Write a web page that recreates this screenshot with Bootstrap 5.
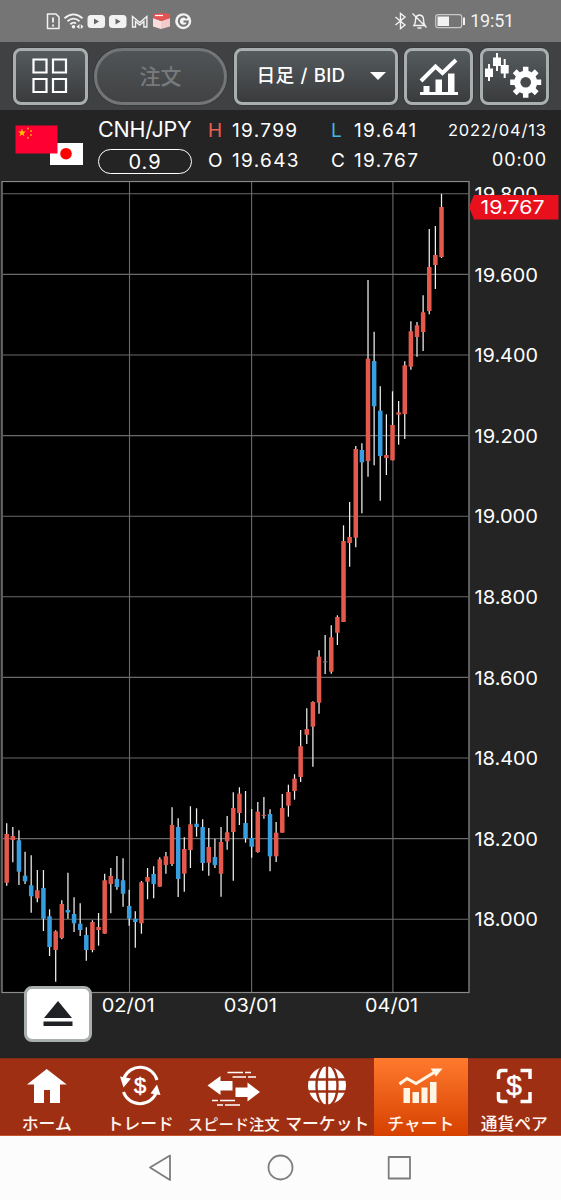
<!DOCTYPE html>
<html lang="ja">
<head>
<meta charset="utf-8">
<meta name="viewport" content="width=device-width, initial-scale=1">
<title>CNH/JPY チャート</title>
<link rel="stylesheet" href="https://cdn.jsdelivr.net/npm/bootstrap@5.3.0/dist/css/bootstrap.min.css">
<style>
body{background:#242424;color:#fff;font-family:Inter,"Noto Sans CJK JP",sans-serif;line-height:1;overflow:hidden}
.app{width:561px;height:1200px}
svg{display:block;flex:none}
.status{height:42px;background:#757575;color:#f2f2f2;padding:0 47px 0 46px;font-family:Roboto,sans-serif;font-size:18px}
.tools{height:68px;background:#404143;padding:0 12px 0 12.5px;gap:6.5px}
.tool{height:57px;border:3px solid #a9afaf;border-radius:8px;background:linear-gradient(#555b5e,#3a3b3d);color:#fff;padding:0;box-shadow:0 0 0 1px #37393b;font-family:Inter,"Noto Sans CJK JP",sans-serif;font-weight:500;line-height:1}
.tool.order{width:133px;border-color:#737676;border-radius:29px;background:linear-gradient(#505456,#414243);color:#777a7c;font-size:21px;font-weight:500}
.info{height:71px;padding:5px 15px 0 15px;display:grid;grid-template-columns:83px 110px 24px 99px 23px 1fr auto;grid-template-rows:30px 30px;align-items:center;font-size:19px;letter-spacing:1.35px}
.info .text-end{letter-spacing:.85px;margin-right:-.85px}
.flags{grid-row:1/3}
.pair{font-size:21.5px;letter-spacing:-.2px}
.spread{width:94px;height:25px;border:1.5px solid #fff;border-radius:13px;font-size:20px;letter-spacing:1px;margin-top:3px}
.chart{height:877px}
.chart text{fill:#fff;font-size:19px}
.eject{left:24px;top:805px;width:68px;height:56px;border:3px solid #a9afaf;border-radius:8px;background:#fff}
.tabs{height:78px;background:#9f2f13;border-top:1px solid #7e2b18;border-bottom:1px solid #c4532e}
.tab{width:93.5px;font-family:"Noto Sans CJK JP",sans-serif;font-weight:500;font-size:16.8px;color:#fff5ee;text-decoration:none;white-space:nowrap;padding-top:4px}
.tab.active{background:linear-gradient(#ff7a2d,#d64000);margin:-1px 0}
.tab span{line-height:20px;margin-top:4px}
.tab .tight{font-size:15.3px}
.sysnav{height:64px;background:#fcfcfc;padding-right:2px}
</style>
</head>
<body>
<main class="app d-flex flex-column position-relative">
<header class="status d-flex align-items-center justify-content-between">
<svg width="150" height="22" viewBox="46 10 150 22" fill="none" stroke="#f2f2f2">
<path d="M51 14h5l3 3v11.500H47.500V14z" stroke-width="1.500" stroke-linejoin="round"/><path d="M53 17.500v5M53 24.500v2" stroke-width="1.800"/>
<path d="M64.500 18.200Q73.500 10.500 82.500 18.200M67.500 21.200Q73.500 16 79.500 21.200M70.300 24.200Q73.500 21.500 76 23.500" stroke-width="1.800"/><circle cx="73.500" cy="26.700" r="1.800" fill="#f2f2f2" stroke="none"/><path d="M79.500 24l-3 2.800 3 2.200zM80.800 24l2.700 2.800-2.700 2.200z" fill="#f2f2f2" stroke="none"/>
<g stroke="none"><rect x="87.500" y="15" width="17.500" height="13" rx="3.500" fill="#f2f2f2"/><path d="M94 18.500l5 3-5 3z" fill="#666"/><rect x="109" y="15" width="17.500" height="13" rx="3.500" fill="#f2f2f2"/><path d="M115.500 18.500l5 3-5 3z" fill="#666"/></g>
<path d="M132.500 27V16.500l7.200 6 7.200-6V27h-3v-5.500l-4.200 3.500-4.200-3.500V27z" stroke-width="1.400"/>
<g stroke="none"><path d="M153 18l8 3v8l-8-2.500z" fill="#f7dddd"/><path d="M170 18l-9 3v8l9-2.500z" fill="#f3c9c9"/><path d="M154 14l7-1 9 1v4l-8.500 3-8.500-3z" fill="#e65353"/><path d="M155 15.500h8" stroke="#fff" stroke-width="1.200"/><circle cx="183.200" cy="21.200" r="8" fill="#f2f2f2"/></g><path d="M187 18.300a4.600 4.600 0 1 0 0 5.800q.8-1 .8-2.500H183.500" stroke="#757575" stroke-width="2"/>
</svg>
<div class="d-flex align-items-center">
<svg width="77" height="22" viewBox="392 10 77 22" fill="none" stroke="#f2f2f2" stroke-width="1.400"><path d="M396.500 17l9.500 8-4.500 3.500V13.500L406 17l-9.500 8"/><path d="M416 25.500h10c-1.500-2-1.500-3-1.500-6q0-4-4-4.500-3.800.5-4 4.500c0 3 .2 4-1.500 6zM413.500 13.500l14 14M418.500 28h4"/><rect x="436.700" y="14.700" width="26" height="13" rx="2.500" stroke="#c8c8c8" stroke-width="1.200"/><rect x="438.500" y="16.500" width="11.500" height="9.500" fill="#f2f2f2" stroke="none"/><path d="M465 17.500v7.500" stroke-width="2"/></svg>
<span style="margin-left:2px;letter-spacing:-.2px">19:51</span>
</div>
</header>

<nav class="tools d-flex align-items-center">
<button class="tool btn d-flex align-items-center justify-content-center" style="width:75px" aria-label="layout"><svg width="36" height="36" fill="none" stroke="#fff" stroke-width="2.200"><path d="M1.500 1.500h13v13h-13zM21 1.500h13v13H21zM1.500 21h13v13h-13zM21 21h13v13H21z"/></svg></button>
<button class="tool order btn">注文</button>
<button class="tool btn d-flex align-items-center" style="width:164px;padding-left:20px;font-size:18.700px"><span style="word-spacing:1px;letter-spacing:.2px">日足 / BID</span><svg class="ms-auto" style="margin-right:9px" width="16" height="10"><path d="M0 1h16L8 9z" fill="#fff"/></svg></button>
<button class="tool btn d-flex align-items-center justify-content-center" style="width:69px" aria-label="indicator"><svg width="40" height="40" viewBox="419 56 40 40"><path d="M421 81l14.500-14.500 7 6.500L456 60" fill="none" stroke="#fff" stroke-width="4"/><path d="M420 92h38v3h-38zM423.500 86h6v7h-6zM435.500 79.500h6.500V93h-6.500zM448 73.500h6.500V93H448z" fill="#fff"/></svg></button>
<button class="tool btn d-flex align-items-center justify-content-center" style="width:69px" aria-label="settings"><svg width="60" height="50" viewBox="485 52 60 50" fill="#fff"><path d="M486 69.500h8v8.500h-8zM494 58.500h8V67h-8zM501.700 66h8v8.500h-8z"/><path d="M490 65v17M498 54v18M505.700 60v19" stroke="#fff" stroke-width="2"/><g transform="translate(526.700 83.300)"><path d="M0-15.500V15.500M-15.500 0H15.500M-11-11L11 11M-11 11L11-11" stroke="#fff" stroke-width="5.500"/><circle r="11.500"/><circle r="5.300" fill="#47494b"/></g></svg></button>
</nav>

<section class="info">
<svg class="flags" width="69" height="42" viewBox="15 124 69 42"><path d="M50 143h33v22H50z" fill="#fff"/><circle cx="66" cy="153.700" r="5.800" fill="#f00"/><path d="M15.500 125.500h42v28h-42z" fill="#ff0032"/><path d="M22 128.500l1 2.900h3l-2.400 1.900.9 3-2.500-1.800-2.500 1.800.9-3-2.400-1.900h3z" fill="#ffc400"/><g fill="#ffa000"><circle cx="28" cy="128.500" r="1"/><circle cx="31" cy="131" r="1"/><circle cx="31" cy="135" r="1"/><circle cx="28" cy="137.700" r="1"/></g></svg>
<span class="pair">CNH/JPY</span><span style="color:#ef5f55">H</span><span>19.799</span><span style="color:#44b5df">L</span><span>19.641</span><span class="text-end" style="font-size:16.500px">2022/04/13</span>
<span class="spread d-flex align-items-center justify-content-center">0.9</span><span>O</span><span>19.643</span><span>C</span><span>19.767</span><span class="text-end" style="font-size:18px">00:00</span>
</section>

<section class="chart position-relative">
<svg id="plot" width="561" height="877" viewBox="0 181 561 877"></svg>
<button class="eject btn position-absolute p-0 d-flex align-items-center justify-content-center" aria-label="open"><svg width="30" height="26" fill="#202124"><path d="M15 0l14 17H1zM.500 20.500h29V25H.500z"/></svg></button>
</section>

<nav class="tabs d-flex">
<a class="tab d-flex flex-column align-items-center" href="#"><svg width="60" height="46" viewBox="17 1063 60 46"><path d="M46.700 1069l20 15.500H60v18.500H50v-13h-6v13H34v-18.500h-7z" fill="#fff"/></svg><span>ホーム</span></a>
<a class="tab d-flex flex-column align-items-center" href="#"><svg width="60" height="46" viewBox="110 1063 60 46"><path d="M124 1078a17.500 17.500 0 0 1 33 2M123.500 1092a17.500 17.500 0 0 0 33 0" fill="none" stroke="#fff" stroke-width="3"/><path d="M120 1076.500l11 2-7.500 9zM160.500 1095l-10-1.500 6.500-9z" fill="#fff"/><text x="140" y="1093" text-anchor="middle" font-family="Liberation Sans" font-size="22" stroke="#fff" stroke-width=".5" fill="#fff">$</text></svg><span>トレード</span></a>
<a class="tab d-flex flex-column align-items-center" href="#"><svg width="60" height="46" viewBox="204 1063 60 46" fill="#fff"><path d="M207.500 1085.500l13-9.500v5h12v9.500h-12v4.500zM260 1092l-12.500-9.500v5h-12v9.500h12v4.500z"/><path d="M227.500 1072.500H243m2 0h6M232.500 1077H246m2 0h8M212 1100.500h6m2 0h15M217 1105h6m2 0h15" stroke="#fff" stroke-width="1.400"/></svg><span class="tight">スピード注文</span></a>
<a class="tab d-flex flex-column align-items-center" href="#"><svg width="60" height="46" viewBox="297 1063 60 46"><circle cx="327" cy="1085.500" r="19" fill="#fff"/><g fill="none" stroke="#9f2f13" stroke-width="2.400"><path d="M327 1065v41M307 1079.500h40M307 1091.500h40"/><ellipse cx="327" cy="1085.500" rx="10.500" ry="21"/></g></svg><span>マーケット</span></a>
<a class="tab active d-flex flex-column align-items-center pt-1" href="#"><svg width="60" height="47" viewBox="391 1062 60 47"><path d="M399.500 1084l7.500-5.500 9 5 18-11" fill="none" stroke="#fff5e5" stroke-width="3"/><path d="M430.500 1068.500h12l-6.500 8zM403.500 1088h6.500v15h-6.500zM412.500 1092h6.500v11h-6.500zM421.500 1087.500h6v15.500h-6zM430 1082h6.500v21H430z" fill="#fff5e5"/></svg><span>チャート</span></a>
<a class="tab d-flex flex-column align-items-center" href="#"><svg width="60" height="46" viewBox="484 1063 60 46"><path d="M498.500 1079v-5q0-3.500 3.500-3.500h5.500M520.500 1070.500h9.500v8.500M498.500 1092v6.500q0 3 3.500 3h5.500M520.500 1101.500h9.500V1092" fill="none" stroke="#fff" stroke-width="3.500"/><text x="514" y="1095" text-anchor="middle" font-family="Liberation Sans" font-size="28" stroke="#fff" stroke-width=".5" fill="#fff">$</text></svg><span>通貨ペア</span></a>
</nav>
<footer class="sysnav d-flex justify-content-center align-items-center">
<svg width="270" height="30" viewBox="145 1153 270 30" fill="none" stroke="#7d7d7d" stroke-width="1.800" stroke-linejoin="round"><path d="M150 1167.500l20-12v24.500z"/><circle cx="280.500" cy="1167.500" r="12"/><rect x="388.700" y="1157" width="21.300" height="21.500"/></svg>
</footer>
</main>
<script src="https://cdn.jsdelivr.net/npm/bootstrap@5.3.0/dist/js/bootstrap.bundle.min.js"></script>
<script>
// Each candle: wick top, body top, body bottom, wick bottom, colour (r = up, b = down, g = flat)
const candles = `823.3 834 882.7 885.7 r|827 836 840 862.3 r|830.3 840.3 871.7 885 b|851.7 875.7 881.3 884 b|855.3 885.3 896.3 912.7 b|870 890.3 898.3 902.3 r|870 888 918.7 931 b|909.3 916.3 947 956 b|930.3 931.3 950 981.7 r|900.3 904 938 939.3 r|872.7 910 912.5 918.7 b|897.3 914 923.3 932 b|903.3 923.7 930 936 b|927.3 935 950 960.7 b|920.3 922 950 952.3 r|913 927 930 945.7 r|873.7 880.3 933.7 933.7 r|868 876 884 913.3 r|856 879 887 889.7 b|858.3 880.3 893.7 906.7 b|889.7 906 918.7 925.7 b|911.3 918.7 922 947.7 b|881 882.3 923.3 933.7 r|868 877 881.7 899.3 r|866.3 874 884 898.3 b|857.3 859.3 886.7 886.7 r|852 856.3 865 873.7 r|807.3 825 864 866 r|818.3 827 879 897 b|837.3 849 873.7 891.7 r|806.3 824.3 850 868 r|808.3 823.7 827 836.7 b|819.3 827 863 870.7 b|828 847 862.7 875.7 r|838.7 857 865 868 b|827 842 873.7 896.7 r|816 832.3 841.3 849.7 r|792.3 808 832 880.7 r|787.3 793.7 813 825 r|791 823 838.3 842.7 b|809 838 846.7 857.7 b|802 811.7 852 852.7 r|797 814.8 815.8 818.7 r|809.3 814 856.3 871.3 b|822 832.7 856.3 862 r|794 808 832.7 832.7 r|784.7 792 805.7 816.7 r|774.3 778.7 791 799.7 r|730 746.3 777 782 r|708.3 729 734.7 744 r|701.3 702 726.7 766.7 r|650.3 656.7 702.7 713.7 r|635 661.3 662.4 674 g|625.3 637.3 671.7 673.7 r|615.3 617 632.7 645 r|525.3 541 622 622 r|502 537 543 566.7 r|446 449 537.7 547.3 r|443.3 450 462.3 513.3 b|280 358.7 461 476.7 r|331.7 361 406.3 465.3 b|386.3 410.7 456 500.7 b|414.3 455 458 475 r|391.3 425 460.3 460.3 r|401 412.3 414.7 444.7 r|361.3 365.3 414 439 r|321.3 331.3 366.7 369.7 r|322 325.3 337 356.7 r|295.3 312.3 332 351 r|229 267 311 314.3 r|226 255 265 289 r|194 207 257 258 r`.split('|');
const colours = {r:'#e5594c', b:'#379fe0', g:'#777'};
let s = '<rect x="2.5" y="181.5" width="466" height="811" fill="#000"/>';
for (let i = 0; i < 10; i++) {
  const y = 193.8 + i * 80.6;
  s += `<path d="M3 ${y}H468" stroke="#6a6a6a" stroke-width="1.1"/>`;
  s += `<text x="474.500" y="${y + 7.1}" textLength="63.500" lengthAdjust="spacingAndGlyphs">${(19.8 - i * .2).toFixed(3)}</text>`;
}
[[129.5,'02/01'],[251.6,'03/01'],[392.9,'04/01']].forEach(([x, t]) => {
  s += `<path d="M${x} 182V992" stroke="#6a6a6a" stroke-width="1.1"/><text x="${x - 27.8}" y="1011.500" textLength="53" lengthAdjust="spacingAndGlyphs">${t}</text>`;
});
candles.forEach((row, i) => {
  const [h, t, b, l, c] = row.split(' '), x = 6.7 + i * 6.124;
  s += `<path d="M${x} ${h}V${l}" stroke="#f0f0f0" stroke-width="1.25"/><path d="M${x} ${t}V${b}" stroke="${colours[c]}" stroke-width="4.5"/>`;
});
s += '<rect x="2" y="181.500" width="467" height="811" fill="none" stroke="#8a8a8a" stroke-width="1.2"/>';
s += '<path d="M469 207l5-12h84.500v24.500H474z" fill="#e8101c"/><text x="480.500" y="214.300" textLength="64" lengthAdjust="spacingAndGlyphs">19.767</text>';
document.getElementById('plot').innerHTML = s;
</script>
</body>
</html>
